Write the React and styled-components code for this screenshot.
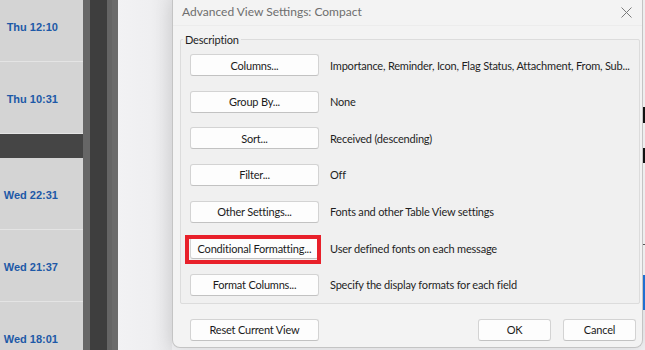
import React from "react"
import styled, { createGlobalStyle } from "styled-components"

const GlobalStyle = createGlobalStyle`
  html, body {
    margin: 0;
    padding: 0;
    background: #f1f1f3;
    overflow: hidden;
  }
  * {
    box-sizing: border-box;
  }
`

const times = [
  { label: "Thu 12:10" },
  { label: "Thu 10:31", band: true },
  { label: "Wed 22:31" },
  { label: "Wed 21:37" },
  { label: "Wed 18:01" },
]

const settings = [
  { name: "Columns...", value: "Importance, Reminder, Icon, Flag Status, Attachment, From, Sub..." },
  { name: "Group By...", value: "None" },
  { name: "Sort...", value: "Received (descending)" },
  { name: "Filter...", value: "Off" },
  { name: "Other Settings...", value: "Fonts and other Table View settings" },
  { name: "Conditional Formatting...", value: "User defined fonts on each message", marked: true },
  { name: "Format Columns...", value: "Specify the display formats for each field" },
]

const App = () => {
  return (
    <>
      <GlobalStyle />
      <Screen>
        <MessageList>
          {times.map((t, i) => (
            <React.Fragment key={i}>
              <TimeRow>
                <Time>{t.label}</Time>
              </TimeRow>
              {t.band && <DarkBand />}
            </React.Fragment>
          ))}
        </MessageList>

        <ScrollTrack>
          <TrackPart tone="#666666" size={7} />
          <TrackPart tone="#3e3e3e" size={17} />
          <TrackPart tone="#656565" size={5} />
          <TrackPart tone="#6b6b6b" size={6} />
        </ScrollTrack>

        <Workspace>
          <Dialog>
            <TitleBar>
              <Title>Advanced View Settings: Compact</Title>
              <CloseButton aria-label="Close">
                <svg width="11" height="11" viewBox="0 0 11 11">
                  <path d="M0.5 0.5 L10.5 10.5 M10.5 0.5 L0.5 10.5" stroke="#7a7a7a" strokeWidth="1" fill="none" />
                </svg>
              </CloseButton>
            </TitleBar>

            <Body>
              <Group>
                <Legend>Description</Legend>
                {settings.map((s) => (
                  <SettingRow key={s.name}>
                    <PushButton marked={s.marked}>{s.name}</PushButton>
                    <Value>{s.value}</Value>
                  </SettingRow>
                ))}
              </Group>

              <Footer>
                <PushButton>Reset Current View</PushButton>
                <FooterRight>
                  <PushButton small>OK</PushButton>
                  <PushButton small>Cancel</PushButton>
                </FooterRight>
              </Footer>
            </Body>
          </Dialog>

          <EdgeStrip>
            <EdgeMark size={107} />
            <EdgeMark size={16} color="#111" />
            <EdgeMark size={25} />
            <EdgeMark size={15} color="#111" />
            <EdgeMark size={81} />
            <EdgeMark size={1} color="#555" />
            <EdgeMark size={30} />
            <EdgeMark size={35} color="#1f6fd1" />
          </EdgeStrip>
        </Workspace>
      </Screen>
    </>
  )
}

export default App

const Screen = styled.div`
  display: flex;
  width: 645px;
  height: 350px;
  overflow: hidden;
`

const MessageList = styled.div`
  width: 83px;
  flex-shrink: 0;
  background: #d4d4d4;
  display: flex;
  flex-direction: column;
  margin-top: -10px;
`

const TimeRow = styled.div`
  height: 72px;
  flex-shrink: 0;
  border-bottom: 1px solid #e4e4e4;
  display: flex;
  align-items: center;
  justify-content: flex-end;
  padding: 3px 25px 0 0;
`

const Time = styled.span`
  font-family: "Liberation Sans", Arial, sans-serif;
  font-weight: bold;
  font-size: 11px;
  color: #1d59a7;
`

const DarkBand = styled.div`
  height: 24px;
  flex-shrink: 0;
  background: #454545;
`

const ScrollTrack = styled.div`
  display: flex;
  flex-shrink: 0;
`

const TrackPart = styled.div`
  width: ${(p) => p.size}px;
  background: ${(p) => p.tone};
`

const Workspace = styled.div`
  flex: 1;
  display: flex;
  align-items: flex-start;
  padding-left: 54px;
  background: linear-gradient(to right, #f2f2f4 0%, #efeff1 60%, #e6e6e8 100%);
  background-size: 54px 100%;
  background-repeat: no-repeat;
  background-color: #f1f1f3;
`

const Dialog = styled.div`
  width: 471px;
  height: 348px;
  flex-shrink: 0;
  background: #f3f3f3;
  border: 1px solid #c4c4c4;
  border-top: none;
  border-radius: 0 0 8px 8px;
  box-shadow: 0 0 18px rgba(0, 0, 0, 0.12);
  display: flex;
  flex-direction: column;
  font-family: Lato, "Noto Sans", sans-serif;
`

const TitleBar = styled.div`
  height: 25px;
  display: flex;
  align-items: center;
  justify-content: space-between;
  padding: 0 9px 3px 9px;
`

const Title = styled.span`
  font-size: 12px;
  color: #6e6e6e;
`

const CloseButton = styled.div`
  display: flex;
  align-items: center;
  justify-content: center;
  width: 11px;
  height: 11px;
  margin: 2px 1px 0 0;
`

const Body = styled.div`
  flex: 1;
  display: flex;
  flex-direction: column;
  padding: 6px 4px 0 7px;
  border-top: 1px solid #ececec;
`

const Group = styled.fieldset`
  margin: 0;
  border: 1px solid #dcdcdc;
  border-radius: 2px;
  background: #f0f0f0;
  padding: 7px 9px 7px 9px;
  display: flex;
  flex-direction: column;
  gap: 14.67px;
`

const Legend = styled.legend`
  font-size: 11px;
  letter-spacing: -0.2px;
  color: #1f1f1f;
  padding: 0 2px;
  margin-left: -7px;
  line-height: 15px;
`

const SettingRow = styled.div`
  display: flex;
  align-items: center;
  gap: 11px;
  height: 22px;
`

const PushButton = styled.div`
  position: relative;
  width: ${(p) => (p.small ? "73px" : "129px")};
  height: 22px;
  flex-shrink: 0;
  display: flex;
  align-items: center;
  justify-content: center;
  background: #fdfdfd;
  border: 1px solid #d3d3d3;
  border-bottom-color: #c2c2c2;
  border-radius: 3px;
  font-size: 11px;
  letter-spacing: -0.2px;
  color: #1b1b1b;
  white-space: nowrap;

  &::after {
    content: "";
    display: ${(p) => (p.marked ? "block" : "none")};
    position: absolute;
    left: -6px;
    right: -3px;
    top: -3px;
    bottom: -6px;
    border: 4px solid #e8202a;
  }
`

const Value = styled.span`
  font-size: 11px;
  letter-spacing: -0.2px;
  color: #1f1f1f;
  white-space: nowrap;
`

const Footer = styled.div`
  display: flex;
  justify-content: space-between;
  align-items: center;
  padding: 15px 2px 0 10px;
`

const FooterRight = styled.div`
  display: flex;
  gap: 12px;
`

const EdgeStrip = styled.div`
  width: 2px;
  display: flex;
  flex-direction: column;
`

const EdgeMark = styled.div`
  height: ${(p) => p.size}px;
  background: ${(p) => p.color || "#eeeeee"};
`
